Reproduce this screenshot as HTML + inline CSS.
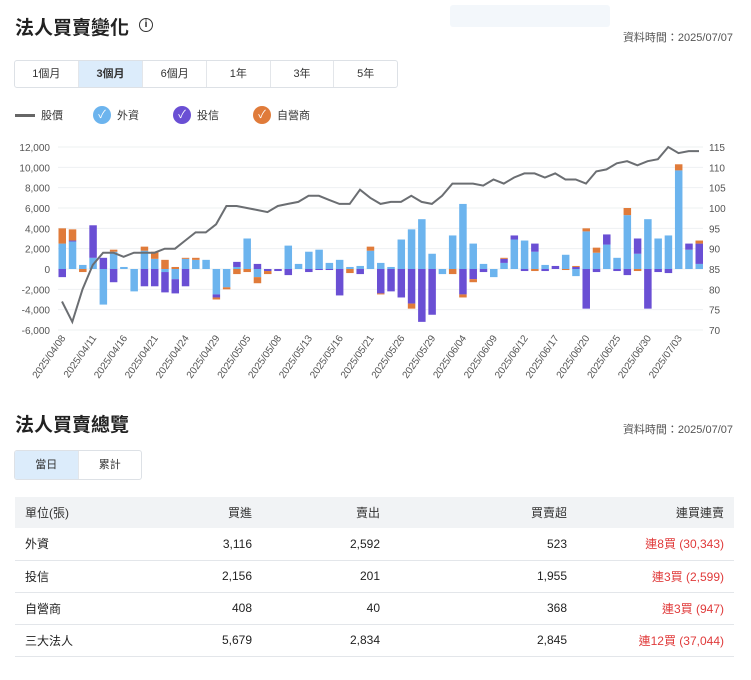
<!DOCTYPE html>
<html><head><meta charset="utf-8"><style>
*{margin:0;padding:0;box-sizing:border-box}
body{width:751px;height:680px;background:#fff;font-family:"Liberation Sans","Noto Sans CJK TC",sans-serif;color:#222;position:relative;overflow:hidden}
.abs{position:absolute}
h2{position:absolute;font-size:19px;font-weight:bold;color:#222}
.time{position:absolute;right:18px;font-size:11px;color:#555}
.tabs{position:absolute;display:flex;border:1px solid #dde1e6;border-radius:3px;overflow:hidden}
.tabs div{height:26px;line-height:26px;text-align:center;font-size:11px;color:#333;border-right:1px solid #e3e6ea}
.tabs div:last-child{border-right:none}
.tabs .on{background:#dcecfb;font-weight:bold}
.leg{position:absolute;top:107px;font-size:11px;color:#333;display:flex;align-items:center}
.dot{width:18px;height:18px;border-radius:50%;color:#fff;font-size:11px;text-align:center;line-height:18px;margin-right:6px}
table{position:absolute;left:15px;top:497px;width:719px;border-collapse:collapse;font-size:12px;table-layout:fixed}
th{background:#f1f3f5;height:31px;font-weight:normal;color:#333;text-align:right;padding:0 10px}
td{height:32px;border-bottom:1px solid #e3e6ea;text-align:right;padding:0 10px;color:#222}
th:first-child,td:first-child{text-align:left}
.r{color:#e03a3a}
</style></head><body>
<h2 style="left:15px;top:13px">法人買賣變化</h2>
<div class="abs" style="left:139px;top:18px;width:14px;height:14px;border:1.5px solid #333;border-radius:50%;font-size:10px;text-align:center;line-height:11px;font-weight:bold">i</div>
<div class="abs" style="left:450px;top:5px;width:160px;height:22px;background:#f3f7fb;border-radius:3px"></div>
<div class="time" style="top:29px">資料時間：2025/07/07</div>
<div class="tabs" style="left:14px;top:60px;width:384px">
<div style="width:64px">1個月</div><div class="on" style="width:65px">3個月</div><div style="width:64px">6個月</div><div style="width:64px">1年</div><div style="width:64px">3年</div><div style="width:63px">5年</div></div>
<div class="leg" style="left:15px"><span style="display:inline-block;width:20px;height:3px;background:#666;margin-right:6px"></span>股價</div>
<div class="leg" style="left:93px;top:106px"><div class="dot" style="background:#6cb4ee">✓</div>外資</div>
<div class="leg" style="left:173px;top:106px"><div class="dot" style="background:#6a4fd4">✓</div>投信</div>
<div class="leg" style="left:253px;top:106px"><div class="dot" style="background:#e07b3a">✓</div>自營商</div>
<svg class="abs" style="left:0;top:0" width="751" height="400" id="c"></svg>
<h2 style="left:15px;top:410px">法人買賣總覽</h2>
<div class="time" style="top:421px">資料時間：2025/07/07</div>
<div class="tabs" style="left:14px;top:450px;width:128px"><div class="on" style="width:64px;height:28px;line-height:28px;font-weight:normal">當日</div><div style="width:63px;height:28px;line-height:28px">累計</div></div>
<table>
<colgroup><col style="width:120px"><col style="width:127px"><col style="width:128px"><col style="width:187px"><col style="width:157px"></colgroup>
<tr><th>單位(張)</th><th>買進</th><th>賣出</th><th>買賣超</th><th>連買連賣</th></tr>
<tr><td>外資</td><td>3,116</td><td>2,592</td><td>523</td><td class="r">連8買 (30,343)</td></tr>
<tr><td>投信</td><td>2,156</td><td>201</td><td>1,955</td><td class="r">連3買 (2,599)</td></tr>
<tr><td>自營商</td><td>408</td><td>40</td><td>368</td><td class="r">連3買 (947)</td></tr>
<tr><td>三大法人</td><td>5,679</td><td>2,834</td><td>2,845</td><td class="r">連12買 (37,044)</td></tr>
</table>
<script>
var s='',X0=58,X1=703,Y0=147,Y1=330;
function y(v){return 269-v*(Y1-Y0)/18000}
function yp(p){return Y0+(115-p)*(Y1-Y0)/45}
for(var v=-6000;v<=12000;v+=2000){var yy=y(v);s+='<line x1="'+X0+'" x2="'+X1+'" y1="'+yy+'" y2="'+yy+'" stroke="#eef0f2"/>';s+='<text x="50" y="'+(yy+4)+'" font-size="10" fill="#555" text-anchor="end">'+v.toLocaleString('en-US')+'</text>';}
for(var p=70;p<=115;p+=5){s+='<text x="709" y="'+(yp(p)+4)+'" font-size="10" fill="#555">'+p+'</text>';}
var d=[[2500,-800,1500],[2700,100,1100],[400,0,-300],[1100,3200,0],[-3500,1100,0],[1700,-1300,200],[200,0,0],[-2200,0,0],[1800,-1700,400],[1000,-1700,700],[-300,-2000,900],[-1000,-1400,200],[1000,-1700,100],[900,0,200],[900,0,0],[-2500,-300,-200],[-1800,0,-200],[200,500,-500],[3000,0,-300],[-800,500,-600],[0,-200,-300],[0,-200,0],[2300,-600,0],[500,0,0],[1700,-300,0],[1900,-100,0],[600,-100,0],[900,-2600,0],[200,0,-400],[300,-500,0],[1800,0,400],[600,-2400,-100],[200,-2200,0],[2900,-2800,0],[3900,-3400,-500],[4900,-5200,0],[1500,-4500,0],[-500,0,0],[3300,0,-500],[6400,-2500,-300],[2500,-1000,-300],[500,-300,0],[-800,0,0],[600,400,100],[2900,400,0],[2800,-200,0],[1700,800,-200],[400,-200,0],[0,300,0],[1400,0,-100],[-700,200,100],[3700,-3900,300],[1600,-300,500],[2400,1000,0],[1100,-200,0],[5300,-600,700],[1500,1500,-200],[4900,-3900,0],[3000,-300,0],[3300,-400,0],[9700,0,600],[1900,600,0],[500,2000,300]];
var pr=[77,72,80,86,89,89,88,89,89,89,90,90,92,94,94,96,100.5,100.5,100,99.5,99,100.5,101,101.5,103,103,102,101,101,104.5,102.5,101,101.5,101.5,103,101.5,101,103,106,106,106,105.5,107,106,107.5,108.5,108.5,107.5,108.5,107,107,106,109,109.5,111,111.5,110.5,111.5,112,115,113.5,114,114];
var col=['#6cb4ee','#6a4fd4','#e07b3a'],n=d.length,st=(699-62)/(n-1),pts=[];
for(var i=0;i<n;i++){var x=62+i*st,pos=0,neg=0;for(var k=0;k<3;k++){var v=d[i][k];if(!v)continue;var a,b;if(v>0){a=pos;b=pos+v;pos=b}else{a=neg;b=neg+v;neg=b}var t=Math.min(y(a),y(b)),h=Math.abs(y(a)-y(b));s+='<rect x="'+(x-3.5)+'" y="'+t+'" width="7.5" height="'+h+'" fill="'+col[k]+'"/>';}
pts.push(x.toFixed(1)+','+yp(pr[i]).toFixed(1));}
var L=['2025/04/08','2025/04/11','2025/04/16','2025/04/21','2025/04/24','2025/04/29','2025/05/05','2025/05/08','2025/05/13','2025/05/16','2025/05/21','2025/05/26','2025/05/29','2025/06/04','2025/06/09','2025/06/12','2025/06/17','2025/06/20','2025/06/25','2025/06/30','2025/07/03'];
for(var j=0;j<L.length;j++){var x=62+j*3*st;s+='<text transform="translate('+(x+4)+',338) rotate(-55)" font-size="10" fill="#555" text-anchor="end">'+L[j]+'</text>'}
s+='<polyline points="'+pts.join(' ')+'" fill="none" stroke="#6b6e72" stroke-width="2"/>';
document.getElementById('c').innerHTML=s;
</script>
</body></html>
